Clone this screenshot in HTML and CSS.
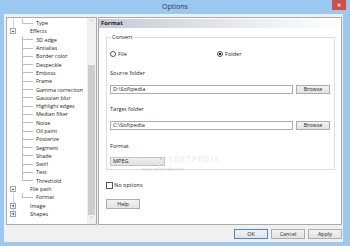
FILE: index.html
```html
<!DOCTYPE html>
<html>
  <head>
    <meta charset="utf-8">
    <title>Options</title>
    <link rel="stylesheet" href="styles.css">
  </head>
  <body>
    <div class="window">
      <div class="titlebar">
        <span class="title">Options</span>
        <span class="close">&#x2715;</span>
      </div>

      <div class="client">
        <div class="main">
          <!-- left tree -->
          <div class="tree">
            <div class="tree-list">
              <div class="row"><span class="c1 root-full"></span><span class="c2 last"></span><span class="label">Type</span></div>
              <div class="row top"><span class="c1 root-up"><span class="box minus"></span></span><span class="label">Effects</span></div>
              <div class="row"><span class="c1"></span><span class="c2"></span><span class="label">3D edge</span></div>
              <div class="row"><span class="c1"></span><span class="c2"></span><span class="label">Antialias</span></div>
              <div class="row"><span class="c1"></span><span class="c2"></span><span class="label">Border color</span></div>
              <div class="row"><span class="c1"></span><span class="c2"></span><span class="label">Despeckle</span></div>
              <div class="row"><span class="c1"></span><span class="c2"></span><span class="label">Emboss</span></div>
              <div class="row"><span class="c1"></span><span class="c2"></span><span class="label">Frame</span></div>
              <div class="row"><span class="c1"></span><span class="c2"></span><span class="label">Gamma correction</span></div>
              <div class="row"><span class="c1"></span><span class="c2"></span><span class="label">Gaussian blur</span></div>
              <div class="row"><span class="c1"></span><span class="c2"></span><span class="label">Highlight edges</span></div>
              <div class="row"><span class="c1"></span><span class="c2"></span><span class="label">Median filter</span></div>
              <div class="row"><span class="c1"></span><span class="c2"></span><span class="label">Noise</span></div>
              <div class="row"><span class="c1"></span><span class="c2"></span><span class="label">Oil paint</span></div>
              <div class="row"><span class="c1"></span><span class="c2"></span><span class="label">Posterize</span></div>
              <div class="row"><span class="c1"></span><span class="c2"></span><span class="label">Segment</span></div>
              <div class="row"><span class="c1"></span><span class="c2"></span><span class="label">Shade</span></div>
              <div class="row"><span class="c1"></span><span class="c2"></span><span class="label">Swirl</span></div>
              <div class="row"><span class="c1"></span><span class="c2"></span><span class="label">Text</span></div>
              <div class="row"><span class="c1"></span><span class="c2 last"></span><span class="label">Threshold</span></div>
              <div class="row top"><span class="c1 root-down"><span class="box minus"></span></span><span class="label">File path</span></div>
              <div class="row"><span class="c1 root-full"></span><span class="c2 last"></span><span class="label">Format</span></div>
              <div class="row top"><span class="c1 root-full"><span class="box plus"></span></span><span class="label">Image</span></div>
              <div class="row top"><span class="c1 root-up"><span class="box plus"></span></span><span class="label">Shapes</span></div>
            </div>
            <div class="vscroll">
              <div class="arrow">&#x02C4;</div>
              <div class="track"><div class="thumb"></div></div>
              <div class="arrow">&#x02C5;</div>
            </div>
          </div>

          <!-- right page -->
          <div class="page">
            <div class="page-head">Format</div>

            <fieldset class="group">
              <legend>Convert</legend>
              <div class="radios">
                <label class="radio"><span class="dot"></span>File</label>
                <label class="radio"><span class="dot on"></span>Folder</label>
              </div>

              <div class="field-label first">Source folder</div>
              <div class="path-row">
                <div class="text-input">D:\Softpedia</div>
                <div class="button browse">Browse</div>
              </div>

              <div class="field-label">Target folder</div>
              <div class="path-row">
                <div class="text-input">C:\Softpedia</div>
                <div class="button browse">Browse</div>
              </div>

              <div class="field-label fmt">Format</div>
              <div class="select">MPEG<span class="caret">&#x02C5;</span></div>

              <div class="watermark">SOFTPEDIA</div>
              <div class="watermark-url">www.softpedia.com</div>
            </fieldset>

            <label class="check"><span class="box-check"></span>No options</label>
            <div class="button help">Help</div>
          </div>
        </div>

        <div class="footer">
          <div class="button default">OK</div>
          <div class="button">Cancel</div>
          <div class="button">Apply</div>
        </div>
      </div>
    </div>
  </body>
</html>
```

FILE: styles.css
```css
body {
  margin: 0;
  font-family: 'Open Sans', 'Noto Sans', sans-serif;
  font-size: 5.6px;
  color: #1e1e1e;
}

.window {
  width: 350px;
  height: 246px;
  background-color: #9ac8f0;
  display: flex;
  flex-direction: column;
  box-sizing: border-box;
  padding: 0 7px 4px 4px;
}

.titlebar {
  height: 14px;
  display: flex;
  align-items: flex-start;
  position: relative;
}

.title {
  flex: 1;
  text-align: center;
  font-size: 7px;
  line-height: 14px;
  color: #2b3a4a;
  padding-left: 3px;
}

.close {
  position: absolute;
  top: 0;
  right: -3px;
  width: 14px;
  height: 10px;
  background-color: #c9504f;
  color: #fff;
  font-size: 5px;
  font-weight: bold;
  line-height: 10px;
  text-align: center;
}

.client {
  flex: 1;
  background-color: #f0f0f0;
  display: flex;
  flex-direction: column;
  padding: 3px 1px 0 2px;
}

.main {
  display: flex;
  height: 208px;
  gap: 1px;
}

/* tree */

.tree {
  width: 91px;
  box-sizing: border-box;
  border: 1px solid #a9abb0;
  background-color: #fff;
  display: flex;
}

.tree-list {
  flex: 1;
  padding-top: 1px;
}

.row {
  display: flex;
  align-items: center;
  height: 8.3px;
}

.c1 {
  width: 15px;
  height: 100%;
  flex: none;
  display: flex;
  align-items: center;
}

.row.top .c1 {
  width: 20px;
}

.root-full {
  background: linear-gradient(#d2d2d2, #d2d2d2) 6px 0 / 1px 100% no-repeat;
}

.root-up {
  background: linear-gradient(#d2d2d2, #d2d2d2) 6px 0 / 1px 50% no-repeat;
}

.root-down {
  background: linear-gradient(#d2d2d2, #d2d2d2) 6px 50% / 1px 50% no-repeat;
}

.c2 {
  width: 11px;
  height: 100%;
  flex: none;
  background:
    linear-gradient(#bdbdbd, #bdbdbd) 0 0 / 1px 100% no-repeat,
    linear-gradient(#bdbdbd, #bdbdbd) 0 50% / 11px 1px no-repeat;
}

.c2.last {
  background:
    linear-gradient(#bdbdbd, #bdbdbd) 0 0 / 1px 50% no-repeat,
    linear-gradient(#bdbdbd, #bdbdbd) 0 50% / 11px 1px no-repeat;
}

.label {
  padding-left: 3px;
  white-space: nowrap;
  line-height: 8px;
  font-size: 5.4px;
}

.box {
  width: 6px;
  height: 6px;
  margin-left: 3px;
  box-sizing: border-box;
  border: 1px solid #a7a7a7;
  background-color: #f7f7f7;
  display: flex;
  align-items: center;
  justify-content: center;
}

.box.minus {
  background-image: linear-gradient(#555, #555);
  background-size: 2px 1px;
  background-position: center;
  background-repeat: no-repeat;
}

.box.plus {
  border-color: #8aa6c8;
  background:
    linear-gradient(#4a6a9a, #4a6a9a) center / 2px 1px no-repeat,
    linear-gradient(#4a6a9a, #4a6a9a) center / 1px 2px no-repeat,
    #eef3fa;
}

.vscroll {
  width: 9px;
  display: flex;
  flex-direction: column;
  background-color: #f0f0f0;
}

.arrow {
  height: 9px;
  font-size: 7px;
  line-height: 10px;
  text-align: center;
  color: #606060;
}

.track {
  flex: 1;
  padding-top: 38px;
}

.thumb {
  height: 150px;
  margin: 0 1px;
  background-color: #cdcdcd;
}

/* right page */

.page {
  flex: 1;
  box-sizing: border-box;
  border: 1px solid #a9abb0;
  background-color: #fff;
  padding: 1px 0 0;
}

.page-head {
  height: 9px;
  line-height: 9px;
  padding-left: 2px;
  font-weight: bold;
  font-size: 6px;
  background: linear-gradient(to right, #c5cad3, #eef0f3 70%, #fff);
}

.group {
  position: relative;
  margin: 6px 6px 0 7px;
  padding: 0 3px 3px 3px;
  border: 1px solid #dcdcdc;
  min-width: 0;
}

.group legend {
  padding: 0 1px;
  margin-left: 1px;
  line-height: 7px;
}

.radios {
  display: flex;
  margin-top: 9px;
  height: 8px;
  align-items: center;
}

.radio {
  display: flex;
  align-items: center;
  width: 107px;
}

.dot {
  width: 6px;
  height: 6px;
  box-sizing: border-box;
  border: 1px solid #555;
  border-radius: 50%;
  margin-right: 2px;
  background-color: #fff;
}

.dot.on {
  background: radial-gradient(circle, #222 0 1.4px, #fff 1.6px);
}

.field-label {
  height: 8px;
  line-height: 8px;
  margin-top: 11px;
}

.field-label.fmt {
  margin-top: 12px;
}

.path-row {
  display: flex;
  justify-content: space-between;
  margin-top: 8px;
  height: 9px;
}

.text-input {
  width: 183px;
  box-sizing: border-box;
  border: 1px solid #abadb3;
  padding-left: 2px;
  line-height: 7px;
}

.button {
  box-sizing: border-box;
  width: 34px;
  height: 10px;
  border: 1px solid #acacac;
  background: linear-gradient(#f2f2f2, #e3e3e3);
  text-align: center;
  line-height: 8px;
  font-size: 5.4px;
}

.browse {
  height: 9px;
  line-height: 7px;
  margin-right: 1px;
}

.select {
  margin-top: 7px;
  width: 55px;
  height: 9px;
  box-sizing: border-box;
  border: 1px solid #c2c2c2;
  background: linear-gradient(#efefef, #e0e0e0);
  display: flex;
  justify-content: space-between;
  padding: 0 2px;
  line-height: 7px;
}

.caret {
  font-size: 6px;
  color: #444;
}

.watermark {
  position: absolute;
  left: 61px;
  top: 112px;
  font-size: 8px;
  font-weight: bold;
  letter-spacing: 1px;
  color: rgba(200, 200, 200, 0.3);
}

.watermark-url {
  position: absolute;
  left: 35px;
  top: 125px;
  font-size: 4.5px;
  color: rgba(170, 170, 170, 0.5);
}

.check {
  display: flex;
  align-items: center;
  margin: 11px 0 0 7px;
  height: 8px;
}

.box-check {
  width: 7px;
  height: 7px;
  box-sizing: border-box;
  border: 1px solid #555;
  background-color: #fff;
  margin-right: 1px;
}

.help {
  margin: 10px 0 0 7px;
}

/* bottom buttons */

.footer {
  display: flex;
  justify-content: flex-end;
  gap: 3px;
  padding: 4px 0 0;
}

.button.default {
  border-color: #3c8fd6;
}
```
